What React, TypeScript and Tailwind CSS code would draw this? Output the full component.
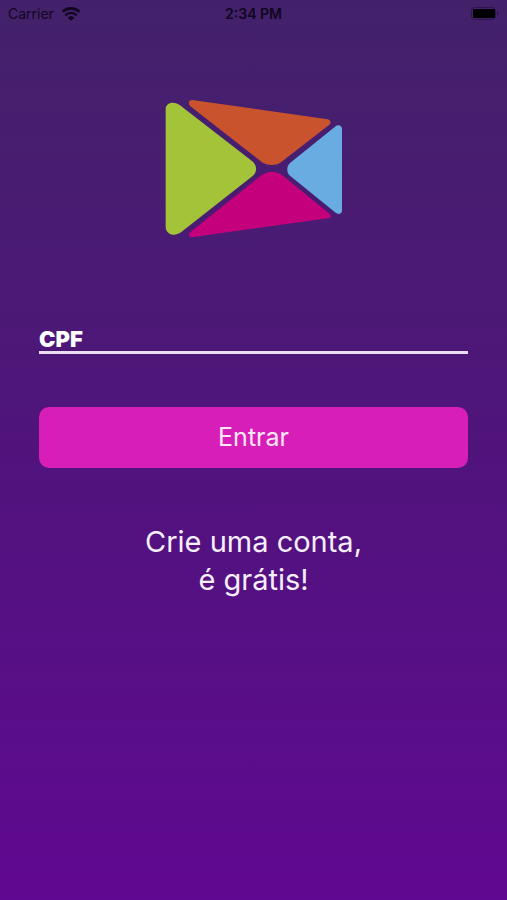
import React from "react";

function StatusBar() {
    return (
        <header className="grid grid-cols-3 items-center h-7 px-2 text-[#0f0620]">
            <div className="flex items-center gap-2 text-sm">
                <span>Carrier</span>
                <svg width="18" height="14" viewBox="0 0 54 42" fill="none" stroke="currentColor" aria-hidden="true">
                    <path d="M2 14 C16 1 38 1 52 14" strokeWidth="8"/>
                    <path d="M10 25 C20 15 34 15 44 25" strokeWidth="7"/>
                    <path d="M27 41 L17 32 C22 26 32 26 37 32 Z" fill="currentColor" stroke="none"/>
                </svg>
            </div>
            <div className="text-center text-sm font-semibold">2:34 PM</div>
            <svg className="justify-self-end" width="28" height="14" viewBox="0 0 28 14" aria-hidden="true">
                <rect x="0.5" y="0.5" width="24" height="12" rx="3" fill="none" stroke="#2e1350"/>
                <rect x="2" y="2" width="22" height="9" rx="1" fill="#000000"/>
                <path d="M26 4 C28 5 28 8 26 9 Z" fill="#2e1350"/>
            </svg>
        </header>
    );
}

function Logo() {
    return (
        <svg width="200" height="160" viewBox="-3 0 600 480" role="img" aria-label="Logo">
            <path
                d="M32 58 C32 38 54 32 74 45 L292 214 C307 226 307 248 292 259 L78 427 C56 442 32 432 32 410 Z"
                fill="#a3c339"/>
            <path
                d="M112 30 L518 88 C528 90 530 99 521 106 L380 215 C365 228 336 228 320 216 L108 50 C98 42 100 30 112 30 Z"
                fill="#c8532d"/>
            <path
                d="M109 424 L316 258 C338 241 362 241 382 256 L524 372 C531 379 527 384 518 385 L115 441 C101 442 97 434 109 424 Z"
                fill="#c5007c"/>
            <path
                d="M405 219 L540 110 C550 102 561 107 561 118 L561 361 C561 373 550 375 540 367 L405 257 C394 248 394 229 405 219 Z"
                fill="#69ace2"/>
        </svg>
    );
}

export default function App() {
    return (
        <div className="min-h-screen bg-linear-to-b from-[#43216a] via-[#50137c] to-[#600891] font-['Inter','Liberation_Sans',sans-serif]">
            <StatusBar/>
            <main className="flex flex-col items-center px-[39px] pt-[62px]">
                <Logo/>
                <form className="w-full mt-[72px]" onSubmit={(e) => e.preventDefault()}>
                    <input
                        type="text"
                        inputMode="numeric"
                        aria-label="CPF"
                        placeholder="CPF"
                        className="block w-full h-8 border-b-3 border-[#eadcf3] bg-transparent pt-1 text-[22px] leading-6 font-black text-white placeholder:text-white placeholder:opacity-100 focus:outline-none"
                    />
                    <button
                        type="submit"
                        className="block w-full mt-[53px] h-[61px] rounded-[10px] bg-[#d81eb9] text-[25px] text-[#fbe9f8]">
                        Entrar
                    </button>
                </form>
                <a href="#" className="mt-[55px] text-center text-[29px] leading-[38px] text-[#f8effc]">
                    Crie uma conta,<br/>é grátis!
                </a>
            </main>
        </div>
    );
}
